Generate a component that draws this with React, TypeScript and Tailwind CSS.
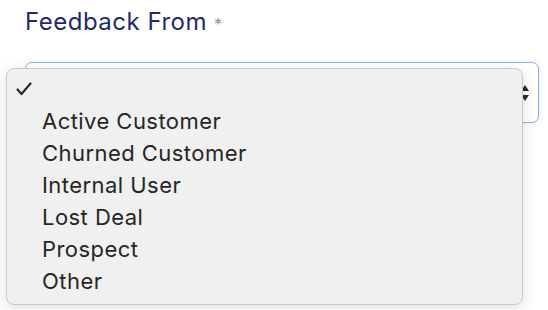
const options = ["Active Customer", "Churned Customer", "Internal User", "Lost Deal", "Prospect", "Other"];

export default function App() {
  return (
    <div className="relative h-[310px] w-[548px] overflow-hidden bg-white" style={{ fontFamily: "Inter, 'Liberation Sans', sans-serif" }}>
      <div className="px-[25px] pt-[7px]">
        <label className="flex items-start gap-[7px] text-[24px] leading-[30px] tracking-[0.5px] text-[#1f2a6c]">
          Feedback From
          <span className="pt-[2px] text-[16px] text-[#8c90a8]">*</span>
        </label>
        <div className="mt-[23px] flex h-[61px] w-[514px] items-center justify-end rounded-[7px] border-[1.5px] border-[#86b4f4] bg-white pr-[9px] shadow-[0_0_6px_rgba(0,0,0,0.08)]">
          <svg width="8" height="18" viewBox="0 0 8 18" className="text-[#2a2a2a]">
            <path d="M4 1 L8 7 L0 7 Z" fill="currentColor" />
            <path d="M0 11 L8 11 L4 17 Z" fill="currentColor" />
          </svg>
        </div>
      </div>

      <div className="absolute left-[6px] top-[68px] w-[517px] rounded-[8px] border border-[#c9c9c9] bg-[#f0f0f0] pb-[7px] pt-[4px] shadow-[0_4px_16px_rgba(0,0,0,0.12)]">
        <div className="flex h-[32px] items-center pl-[9px]">
          <svg width="16" height="14" viewBox="0 0 16 14">
            <path d="M1.5 7.5 L5.5 12 L14.5 1.5" fill="none" stroke="#2b2b2b" strokeWidth="2.2" strokeLinecap="round" strokeLinejoin="round" />
          </svg>
        </div>
        {options.map((o) => (
          <div key={o} className="flex h-[32px] items-center pl-[35px] text-[22px] tracking-[0.45px] text-[#262626]">
            {o}
          </div>
        ))}
      </div>
    </div>
  );
}
